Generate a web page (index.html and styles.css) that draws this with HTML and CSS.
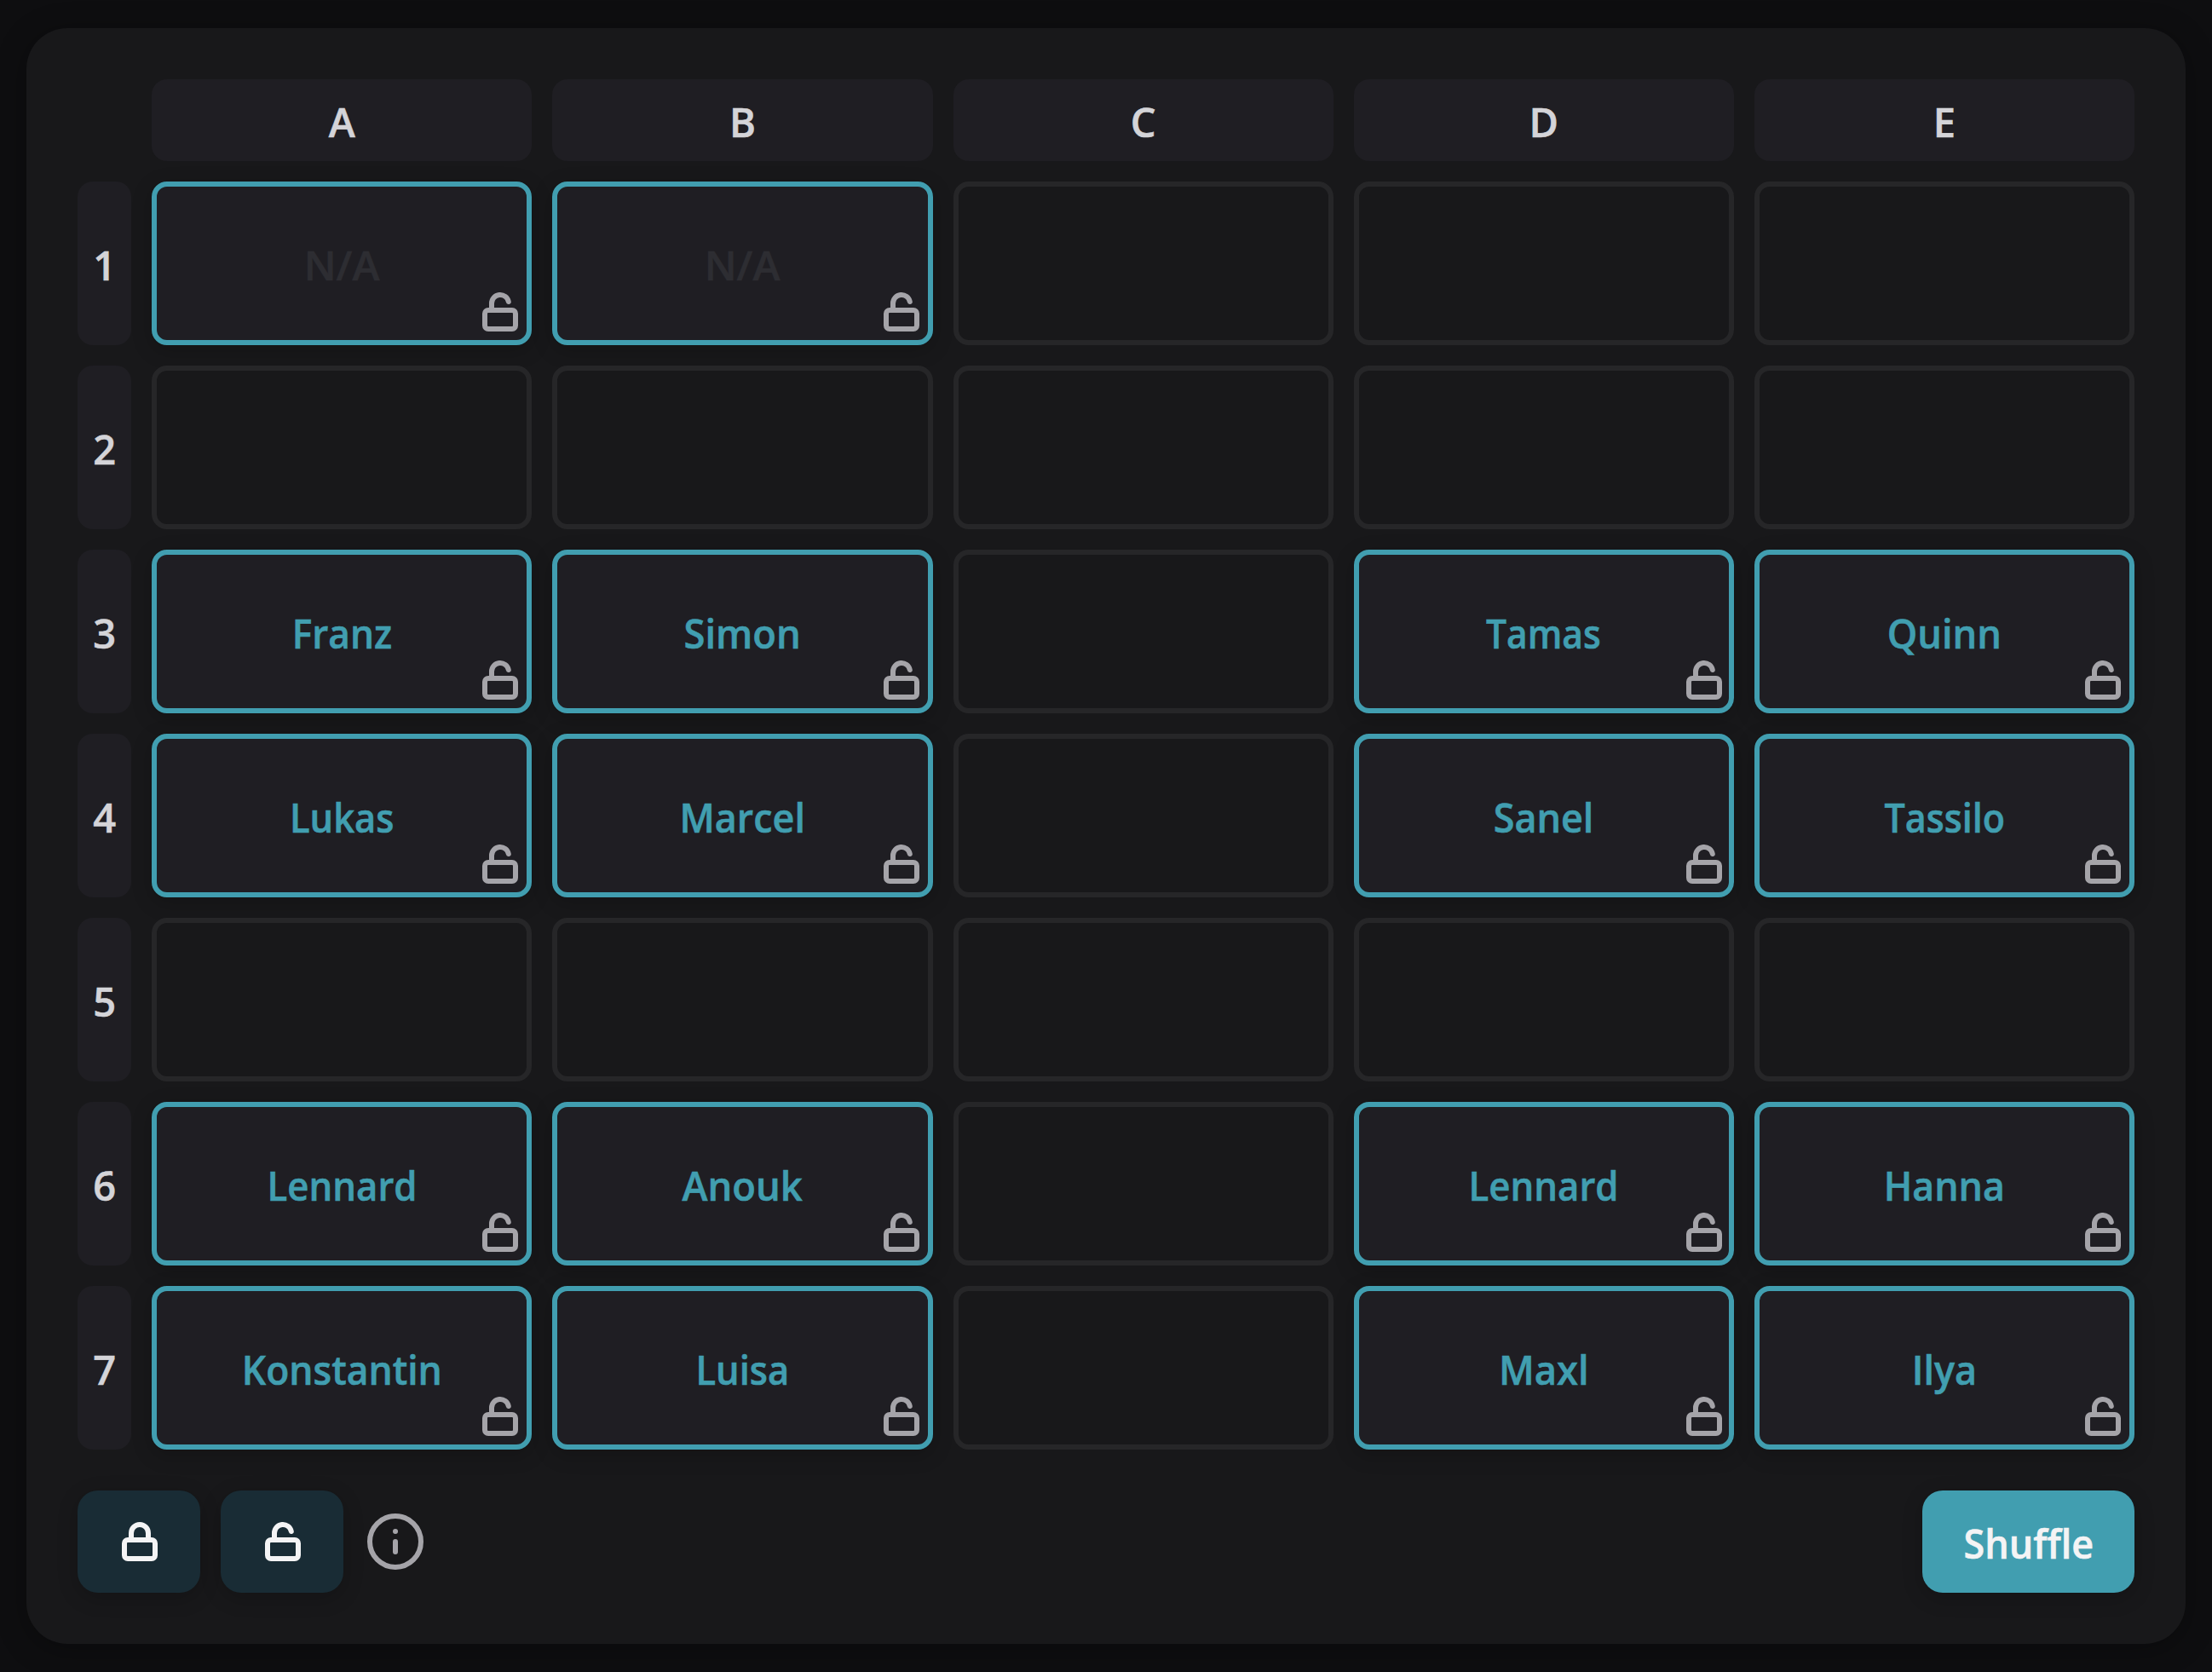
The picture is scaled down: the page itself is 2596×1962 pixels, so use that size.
FILE: index.html
```html
<!DOCTYPE html>
<html lang="en">
<head>
<meta charset="utf-8">
<title>Seating plan</title>
<link rel="stylesheet" href="styles.css">
</head>
<body>
<svg class="sprite" aria-hidden="true">
  <symbol id="unlock" viewBox="0 0 24 24"><rect x="3" y="11" width="18" height="11" rx="2"/><path d="M7 11V7a5 5 0 0 1 9.9-1"/></symbol>
  <symbol id="lock" viewBox="0 0 24 24"><rect x="3" y="11" width="18" height="11" rx="2"/><path d="M7 11V7a5 5 0 0 1 10 0v4"/></symbol>
  <symbol id="info" viewBox="0 0 24 24"><circle cx="12" cy="12" r="10"/><path d="M12 16v-4M12 8h.01"/></symbol>
</svg>
<main class="panel">
  <div class="grid" id="grid"></div>
  <div class="toolbar">
    <button class="tool" aria-label="Lock all"><svg class="icon"><use href="#lock"/></svg></button>
    <button class="tool" aria-label="Unlock all"><svg class="icon"><use href="#unlock"/></svg></button>
    <svg class="info"><use href="#info"/></svg>
    <button class="shuffle"><span class="label">Shuffle</span></button>
  </div>
</main>
<script src="grid.js"></script>
</body>
</html>
```

FILE: styles.css
```css
* {
  box-sizing: border-box;
}

body {
  margin: 0;
  padding: 33px 31px;
  background: #0e0e10;
  color: #d4d4d8;
  font: 600 47px/72px "Open Sans", "Noto Sans", sans-serif;
}

.sprite {
  position: absolute;
  width: 0;
  height: 0;
}

svg {
  fill: none;
  stroke: currentColor;
  stroke-linecap: round;
  stroke-linejoin: round;
}

.panel {
  height: 1896px;
  padding: 60px;
  border-radius: 48px;
  background: #18181a;
  box-shadow: 0 6px 36px rgba(0, 0, 0, 0.3);
}

.grid {
  display: grid;
  grid-template-columns: 63.3px repeat(5, minmax(0, 1fr));
  grid-template-rows: 96px repeat(7, 192px);
  gap: 24px;
}

.head,
.cell {
  display: flex;
  align-items: center;
  justify-content: center;
  border-radius: 18px;
}

.head {
  background: #1f1e23;
}

.cell {
  position: relative;
  border: 6px solid #262628;
}

.filled {
  border-color: #419eb0;
  background: #1f1e23;
  color: #419eb0;
  box-shadow: 0 6px 24px rgba(0, 0, 0, 0.2);
}

.empty .label {
  color: #2d2d32;
}

.label {
  padding-top: 4px;
  transform: scaleX(var(--fit, 1));
  -webkit-text-stroke: 0.6px currentColor;
}

.badge {
  position: absolute;
  right: 7px;
  bottom: 9px;
  width: 48px;
  height: 48px;
  color: #a5a4a9;
  stroke-width: 3;
}

.cell:nth-child(6n + 5) .badge {
  right: 5px;
}

.toolbar {
  display: flex;
  align-items: center;
  gap: 24px;
  margin-top: 48px;
}

button {
  display: flex;
  align-items: center;
  justify-content: center;
  height: 120px;
  border: 0;
  border-radius: 24px;
  color: #f4f4f5;
  font: inherit;
  box-shadow: 0 6px 24px rgba(0, 0, 0, 0.2);
}

.tool {
  width: 144px;
  padding: 0 0 0 2px;
  background: #192c35;
}

.icon {
  width: 48px;
  height: 48px;
  stroke-width: 3;
}

.info {
  width: 72px;
  height: 72px;
  margin-left: 1px;
  color: #a5a4a9;
  stroke-width: 2;
}

.shuffle {
  --fit: 0.955;
  width: 249px;
  margin-left: auto;
  padding: 0;
  background: #419eb0;
}
```

FILE: grid.js
```js
const columns = ["A", "B", "C", "D", "E"];
const seats = [
  ["N/A", "N/A", null, null, null],
  [null, null, null, null, null],
  ["Franz", "Simon", null, "Tamas", "Quinn"],
  ["Lukas", "Marcel", null, "Sanel", "Tassilo"],
  [null, null, null, null, null],
  ["Lennard", "Anouk", null, "Lennard", "Hanna"],
  ["Konstantin", "Luisa", null, "Maxl", "Ilya"],
];

// Horizontal fit of each label relative to the font's natural width.
const fit = {
  "N/A": 1.03, Franz: 0.94, Simon: 0.965, Tamas: 0.905, Quinn: 0.96,
  Lukas: 0.925, Marcel: 0.955, Sanel: 0.955, Tassilo: 0.915,
  Lennard: 0.93, Anouk: 0.965, Hanna: 0.95,
  Konstantin: 0.945, Luisa: 0.925, Maxl: 0.965, Ilya: 0.955,
};

const head = (text) => `<div class="head"><span class="label">${text}</span></div>`;
const cell = (name) =>
  name
    ? `<div class="cell filled${name === "N/A" ? " empty" : ""}"><span class="label" style="--fit: ${fit[name]}">${name}</span><svg class="badge"><use href="#unlock"/></svg></div>`
    : `<div class="cell"></div>`;

document.getElementById("grid").innerHTML =
  "<div></div>" +
  columns.map(head).join("") +
  seats.map((row, i) => head(i + 1) + row.map(cell).join("")).join("");
```
